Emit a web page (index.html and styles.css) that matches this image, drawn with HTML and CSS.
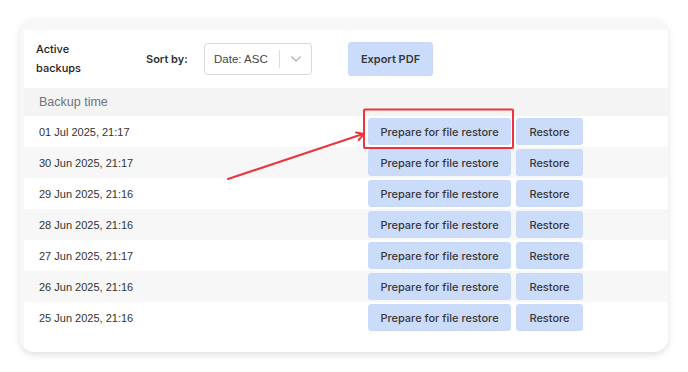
FILE: index.html
```html
<!DOCTYPE html>
<html lang="en">
<head>
    <meta charset="UTF-8">
    <meta name="viewport" content="width=device-width, initial-scale=1.0">
    <title>Active backups</title>
    <link rel="stylesheet" href="styles.css">
</head>
<body>
    <div class="page">
        <div class="card">
            <div class="panel">
                <div class="toolbar">
                    <div class="title">Active<br>backups</div>
                    <div class="sort-label">Sort by:</div>
                    <div class="select">
                        <span class="select-value">Date: ASC</span>
                        <span class="select-sep"></span>
                        <svg class="chevron" width="12" height="8" viewBox="0 0 12 8">
                            <path d="M1.5 1.5 L6 6 L10.5 1.5" fill="none" stroke="#b5b5b5" stroke-width="1.4"/>
                        </svg>
                    </div>
                    <button class="btn btn-export">Export PDF</button>
                </div>

                <table>
                    <thead>
                        <tr>
                            <th>Backup time</th>
                            <th></th>
                        </tr>
                    </thead>
                    <tbody>
                        <tr>
                            <td class="date">01 Jul 2025, 21:17</td>
                            <td class="actions"><button class="btn btn-prepare">Prepare for file restore</button><button class="btn btn-restore">Restore</button></td>
                        </tr>
                        <tr>
                            <td class="date">30 Jun 2025, 21:17</td>
                            <td class="actions"><button class="btn btn-prepare">Prepare for file restore</button><button class="btn btn-restore">Restore</button></td>
                        </tr>
                        <tr>
                            <td class="date">29 Jun 2025, 21:16</td>
                            <td class="actions"><button class="btn btn-prepare">Prepare for file restore</button><button class="btn btn-restore">Restore</button></td>
                        </tr>
                        <tr>
                            <td class="date">28 Jun 2025, 21:16</td>
                            <td class="actions"><button class="btn btn-prepare">Prepare for file restore</button><button class="btn btn-restore">Restore</button></td>
                        </tr>
                        <tr>
                            <td class="date">27 Jun 2025, 21:17</td>
                            <td class="actions"><button class="btn btn-prepare">Prepare for file restore</button><button class="btn btn-restore">Restore</button></td>
                        </tr>
                        <tr>
                            <td class="date">26 Jun 2025, 21:16</td>
                            <td class="actions"><button class="btn btn-prepare">Prepare for file restore</button><button class="btn btn-restore">Restore</button></td>
                        </tr>
                        <tr>
                            <td class="date">25 Jun 2025, 21:16</td>
                            <td class="actions"><button class="btn btn-prepare">Prepare for file restore</button><button class="btn btn-restore">Restore</button></td>
                        </tr>
                    </tbody>
                </table>
            </div>
        </div>

        <!-- annotation drawn over the screenshot -->
        <svg class="annotation" width="688" height="372" viewBox="0 0 688 372">
            <rect x="364" y="109.5" width="149" height="38.5" rx="1" fill="none" stroke="#f0323c" stroke-width="2"/>
            <path d="M228 179 L363 134" fill="none" stroke="#f0323c" stroke-width="2" stroke-linecap="round"/>
            <path d="M356 132.4 L364 134 L358.7 140" fill="none" stroke="#f0323c" stroke-width="2" stroke-linecap="round" stroke-linejoin="round"/>
        </svg>
    </div>
</body>
</html>
```

FILE: styles.css
```css
body {
    margin: 0;
    padding: 0;
    background-color: #fff;
    font-family: Inter, "Noto Sans", sans-serif;
    color: #2b2b2b;
}
.page {
    position: relative;
    width: 688px;
    height: 372px;
    padding: 18px 20px 0 20px;
    box-sizing: border-box;
}
.card {
    background-color: #f8f8f8;
    border-radius: 14px;
    padding: 12px 0 0 4px;
    box-shadow: 0 3px 6px rgba(0, 0, 0, 0.12);
    overflow: hidden;
}
.panel {
    background-color: #fff;
    padding-bottom: 19px;
}
.toolbar {
    display: flex;
    align-items: center;
    height: 58px;
    padding-left: 12px;
}
.title {
    width: 110px;
    font-size: 11px;
    font-weight: 500;
    line-height: 19px;
    color: #222;
}
.sort-label {
    width: 58px;
    font-size: 11px;
    font-weight: 600;
    color: #333;
}
.select {
    display: flex;
    align-items: center;
    width: 108px;
    height: 32px;
    box-sizing: border-box;
    border: 1px solid #d9d9d9;
    border-radius: 4px;
    padding-left: 9px;
    margin-right: 36px;
}
.select-value {
    font-family: "Liberation Sans", Arial, sans-serif;
    font-size: 11.5px;
    color: #444;
    width: 65px;
}
.select-sep {
    width: 1px;
    height: 18px;
    background-color: #dcdcdc;
    margin-right: 10px;
}
.btn {
    font-family: Inter, "Noto Sans", sans-serif;
    background-color: #cbdcfb;
    border: 1px solid #c8d9fa;
    border-radius: 3px;
    color: #383838;
    font-size: 11px;
    font-weight: 500;
    cursor: pointer;
    padding: 0;
}
.btn-export {
    width: 85px;
    height: 34px;
    font-weight: 600;
}
table {
    width: 100%;
    border-collapse: collapse;
}
th {
    height: 28px;
    padding: 0 0 0 15px;
    text-align: left;
    background-color: #f4f4f4;
    font-family: "Liberation Sans", Arial, sans-serif;
    font-size: 12.5px;
    font-weight: normal;
    color: #6b7280;
}
td {
    height: 31px;
    padding: 0;
}
tbody tr:nth-child(even) {
    background-color: #f7f7f7;
}
.date {
    width: 329px;
    padding-left: 15px;
    font-family: "Liberation Sans", Arial, sans-serif;
    font-size: 11px;
    color: #333;
}
.actions {
    display: flex;
    align-items: center;
    gap: 5px;
    height: 31px;
}
.btn-prepare {
    width: 143px;
    height: 27px;
}
.btn-restore {
    width: 67px;
    height: 27px;
}
.annotation {
    position: absolute;
    left: 0;
    top: 0;
    pointer-events: none;
}
```
